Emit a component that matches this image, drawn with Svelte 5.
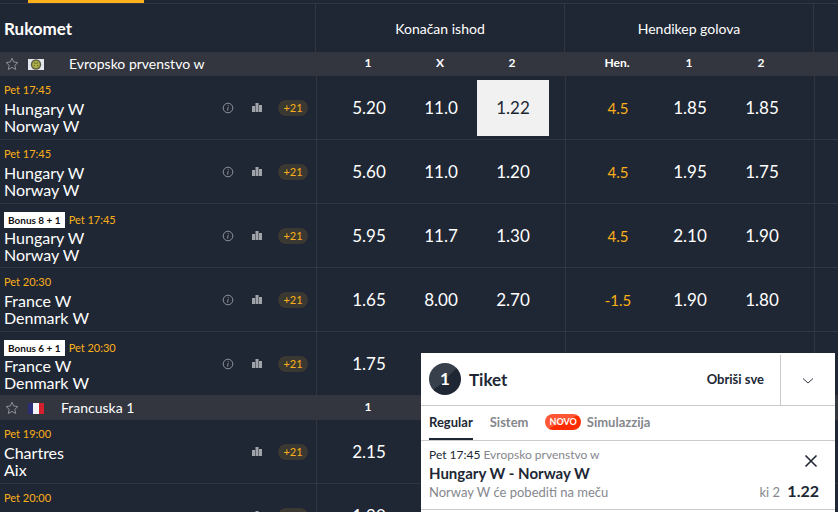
<script lang="ts">
	type Match = {
		time: string;
		home: string;
		away: string;
		odds: string[];
		handicap: string[];
		bonus?: string;
		info?: boolean;
	};

	const leagues: {
		name: string;
		flag: string;
		columns: string[];
		handicapColumns: string[];
		matches: Match[];
	}[] = [
		{
			name: 'Evropsko prvenstvo w',
			flag: 'europe',
			columns: ['1', 'X', '2'],
			handicapColumns: ['Hen.', '1', '2'],
			matches: [
				{
					time: 'Pet 17:45',
					home: 'Hungary W',
					away: 'Norway W',
					odds: ['5.20', '11.0', '1.22'],
					handicap: ['4.5', '1.85', '1.85'],
					info: true
				},
				{
					time: 'Pet 17:45',
					home: 'Hungary W',
					away: 'Norway W',
					odds: ['5.60', '11.0', '1.20'],
					handicap: ['4.5', '1.95', '1.75'],
					info: true
				},
				{
					time: 'Pet 17:45',
					home: 'Hungary W',
					away: 'Norway W',
					odds: ['5.95', '11.7', '1.30'],
					handicap: ['4.5', '2.10', '1.90'],
					bonus: 'Bonus 8 + 1',
					info: true
				},
				{
					time: 'Pet 20:30',
					home: 'France W',
					away: 'Denmark W',
					odds: ['1.65', '8.00', '2.70'],
					handicap: ['-1.5', '1.90', '1.80'],
					info: true
				},
				{
					time: 'Pet 20:30',
					home: 'France W',
					away: 'Denmark W',
					odds: ['1.75'],
					handicap: [],
					bonus: 'Bonus 6 + 1',
					info: true
				}
			]
		},
		{
			name: 'Francuska 1',
			flag: 'france',
			columns: ['1'],
			handicapColumns: [],
			matches: [
				{
					time: 'Pet 19:00',
					home: 'Chartres',
					away: 'Aix',
					odds: ['2.15'],
					handicap: []
				},
				{
					time: 'Pet 20:00',
					home: '',
					away: '',
					odds: ['1.90'],
					handicap: []
				}
			]
		}
	];

	let selected = $state('0-0-2');
	let tab = $state('Regular');
</script>

<main>
	<div class="sports"><span class="active-sport"></span></div>
	<table>
		<colgroup>
			<col class="col-event" />
			<col class="col-market" />
			<col class="col-market" />
			<col />
		</colgroup>
		<thead>
			<tr>
				<th class="sport">Rukomet</th>
				<th>Konačan ishod</th>
				<th>Hendikep golova</th>
				<th></th>
			</tr>
		</thead>
		{#each leagues as league, l}
			<tbody>
				<tr class="league">
					<th scope="rowgroup">
						<div class="league-name">
							<button class="star" aria-label="Omiljeno">
								<svg width="14" height="14" viewBox="0 0 14 14">
									<path
										d="M7 1.2 8.7 5l4.2.5-3.1 2.8.9 4.2L7 10.4l-3.7 2.1.9-4.2-3.1-2.8L5.3 5z"
										fill="none"
										stroke="#8d9097"
										stroke-linejoin="round"
									/>
								</svg>
							</button>
							{#if league.flag === 'france'}
								<svg class="flag" width="16" height="11" viewBox="0 0 16 11">
									<path fill="#2b2d78" d="M0 0h5v11H0z" />
									<path fill="#f4f4f6" d="M5 0h6v11H5z" />
									<path fill="#d3202c" d="M11 0h5v11h-5z" />
								</svg>
							{:else}
								<svg class="flag wide" width="16" height="11" viewBox="0 0 16 11">
									<path fill="#e6e6ee" d="M0 0h16v11H0z" />
									<circle cx="8" cy="5.5" r="5.2" fill="#5c5f45" />
									<circle cx="8" cy="5.5" r="3.8" fill="#a9ab45" />
									<path d="m5.5 3 5 4.5M6 7l4-3.5" stroke="#63652b" />
									<path d="m7 5 2 1.5" stroke="#dfe06d" />
								</svg>
							{/if}
							<span>{league.name}</span>
						</div>
					</th>
					{#each [league.columns, league.handicapColumns] as columns}
						<td>
							<div class="labels">
								{#each columns as column}<span>{column}</span>{/each}
							</div>
						</td>
					{/each}
					<td></td>
				</tr>
				{#each league.matches as match, m}
					<tr class="match">
						<td class="event">
							<div class="event-row">
								<div class="teams">
									<div class="time" class:with-bonus={match.bonus}>
										{#if match.bonus}<span class="bonus">{match.bonus}</span>{/if}
										<span>{match.time}</span>
									</div>
									<div>{match.home}</div>
									<div>{match.away}</div>
								</div>
								<div class="actions">
									{#if match.info}
										<button aria-label="Informacije">
											<svg width="12" height="12" viewBox="0 0 12 12" fill="none" stroke="#8d9097">
												<circle cx="6" cy="6" r="4.8" />
												<path d="M6.2 5 5.5 8.7M6.4 3.1l-.2 1" />
											</svg>
										</button>
									{/if}
									<button aria-label="Statistika">
										<svg width="12" height="12" viewBox="0 0 12 12" fill="#a0a3a8">
											<path d="M1 4h3v6H1zM4.5 1h3v9h-3zM8 3h3v7H8z" />
										</svg>
									</button>
									<button class="more">+21</button>
								</div>
							</div>
						</td>
						<td>
							<div class="odds">
								{#each match.odds as odd, o}
									<button
										class:selected={selected === `${l}-${m}-${o}`}
										onclick={() => (selected = `${l}-${m}-${o}`)}>{odd}</button
									>
								{/each}
							</div>
						</td>
						<td>
							<div class="odds">
								{#each match.handicap as odd, o}
									{#if o === 0}
										<span class="line">{odd}</span>
									{:else}
										<button>{odd}</button>
									{/if}
								{/each}
							</div>
						</td>
						<td></td>
					</tr>
				{/each}
			</tbody>
		{/each}
	</table>
</main>

<aside class="ticket">
	<header>
		<span class="count">1</span>
		<h2>Tiket</h2>
		<button class="clear">Obriši sve</button>
		<button class="toggle" aria-label="Sakrij tiket">
			<svg width="12" height="8" viewBox="0 0 12 8" fill="none" stroke="#333a46">
				<path d="m1 1.5 5 4.5 5-4.5" />
			</svg>
		</button>
	</header>
	<nav>
		<button class:active={tab === 'Regular'} onclick={() => (tab = 'Regular')}>Regular</button>
		<button class:active={tab === 'Sistem'} onclick={() => (tab = 'Sistem')}>Sistem</button>
		<button class:active={tab === 'Simulazzija'} onclick={() => (tab = 'Simulazzija')}>
			<span class="new">NOVO</span>Simulazzija
		</button>
	</nav>
	<div class="bet">
		<div>
			<p class="when">Pet 17:45 <span>Evropsko prvenstvo w</span></p>
			<h3>Hungary W - Norway W</h3>
			<p class="pick">Norway W će pobediti na meču</p>
		</div>
		<div class="bet-side">
			<button aria-label="Ukloni">
				<svg width="16" height="14" viewBox="0 0 16 14" stroke="#202734" stroke-width="1.6">
					<path d="m2.5 1.5 11 11m0-11-11 11" />
				</svg>
			</button>
			<p>ki 2 <strong>1.22</strong></p>
		</div>
	</div>
</aside>

<style>
	:global(body) {
		margin: 0;
		background: #202734;
	}

	main,
	.ticket {
		font-family: Lato, 'Noto Sans', sans-serif;
	}

	main {
		height: 100vh;
		overflow-y: auto;
		scrollbar-width: none;
		color: #fff;
	}

	button {
		padding: 0;
		border: 0;
		background: none;
		color: inherit;
		font: inherit;
		cursor: pointer;
	}

	svg {
		display: block;
	}

	p,
	h2,
	h3 {
		margin: 0;
	}

	.sports {
		height: 3px;
		padding-left: 28px;
		border-bottom: 1px solid #313642;
	}

	.active-sport {
		display: block;
		width: 116px;
		height: 3px;
		background: #fbb019;
	}

	table {
		width: 100%;
		table-layout: fixed;
		border-spacing: 0;
	}

	th,
	td {
		padding: 0;
		vertical-align: top;
	}

	.col-event {
		width: 316px;
	}

	.col-market {
		width: 249px;
	}

	thead th {
		height: 48px;
		border-right: 1px solid #313642;
		font-size: 14px;
		font-weight: 400;
		vertical-align: middle;
	}

	thead th:last-child {
		border-right: 0;
	}

	thead .sport {
		padding-left: 4px;
		font-size: 17px;
		font-weight: 700;
		text-align: left;
	}

	.league {
		background: #33363f;
	}

	.league-name {
		display: flex;
		align-items: center;
		height: 24px;
		padding-left: 5px;
		font-size: 14px;
		font-weight: 400;
		line-height: 16px;
	}

	.flag {
		margin-left: 9px;
		margin-right: 17px;
	}

	.flag.wide {
		margin-right: 25px;
	}

	.labels {
		display: flex;
		padding: 0 16px;
	}

	.labels span {
		width: 72px;
		font-size: 12px;
		font-weight: 700;
		line-height: 22px;
		text-align: center;
	}

	.match td {
		height: 63px;
		border-bottom: 1px solid #313642;
	}

	.match:last-child td {
		border-bottom-color: #33363f;
	}

	.match td + td {
		border-left: 1px solid #313642;
	}

	.event-row {
		display: flex;
		justify-content: space-between;
		padding: 0 8px 0 4px;
	}

	.teams {
		padding-top: 7px;
		font-size: 16px;
		line-height: 17px;
	}

	.time {
		display: flex;
		gap: 4px;
		margin-bottom: 4px;
		color: #fbb019;
		font-size: 11px;
		line-height: 13px;
	}

	.time.with-bonus {
		margin: 1px 0;
		line-height: 16px;
	}

	.bonus {
		padding: 0 4px;
		background: #fff;
		color: #111;
		font-size: 10px;
		font-weight: 700;
	}

	.actions {
		display: flex;
		align-items: center;
		gap: 17px;
		height: 63px;
	}

	.more {
		width: 30px;
		height: 16px;
		margin-left: -2px;
		border-radius: 8px;
		background: #393832;
		color: #fbb019;
		font-size: 11px;
		line-height: 16px;
	}

	.odds {
		display: flex;
		padding: 4px 16px 0;
	}

	.odds button,
	.line {
		width: 72px;
		height: 56px;
		font-size: 17px;
		line-height: 56px;
		text-align: center;
	}

	.odds .line {
		color: #fbb019;
		font-size: 15px;
	}

	.odds .selected {
		background: #f1f1f1;
		color: #202734;
	}

	.ticket {
		position: fixed;
		right: 3px;
		bottom: 0;
		width: 414px;
		padding-bottom: 2px;
		background: #fff;
		color: #202734;
	}

	.ticket header {
		display: flex;
		align-items: center;
		height: 52px;
		padding-left: 8px;
		border-bottom: 1px solid #cbcbcd;
	}

	.count {
		width: 32px;
		border-radius: 50%;
		background: linear-gradient(135deg, #37404b 50%, #202734 50%);
		color: #fff;
		font-size: 17px;
		font-weight: 700;
		line-height: 32px;
		text-align: center;
	}

	h2 {
		margin-left: 8px;
		font-size: 17px;
		font-weight: 700;
	}

	.clear {
		margin-left: auto;
		padding-right: 16px;
		font-size: 13px;
		font-weight: 700;
	}

	.toggle {
		display: flex;
		align-items: center;
		justify-content: center;
		align-self: stretch;
		width: 55px;
		margin-top: 2px;
		border-left: 1px solid #cbcbcd;
	}

	.toggle svg {
		margin-top: 2px;
	}

	nav {
		display: flex;
		gap: 17px;
		height: 34px;
		padding: 0 8px;
		border-bottom: 1px solid #cbcbcd;
	}

	nav button {
		display: flex;
		align-items: center;
		gap: 6px;
		border-bottom: 2px solid transparent;
		color: #85878d;
		font-size: 13px;
		font-weight: 700;
	}

	nav .active {
		border-color: #202734;
		color: #202734;
	}

	.new {
		padding: 0 4px;
		border-radius: 8px;
		background: linear-gradient(155deg, #ff5736 50%, #ff2b00 50%);
		color: #fff;
		font-size: 9px;
		line-height: 16px;
	}

	.bet {
		display: flex;
		justify-content: space-between;
		padding: 5px 16px 7px 8px;
		border-bottom: 1px solid #cbcbcd;
	}

	.when {
		font-size: 12px;
		line-height: 18px;
	}

	.when span,
	.pick,
	.bet-side {
		color: #85878d;
	}

	h3 {
		font-size: 15px;
		line-height: 19px;
	}

	.pick {
		font-size: 13px;
		line-height: 19px;
	}

	.bet-side {
		display: flex;
		flex-direction: column;
		align-items: flex-end;
		justify-content: space-between;
		padding-top: 8px;
		font-size: 13px;
		line-height: 19px;
	}

	strong {
		margin-left: 4px;
		color: #202734;
		font-size: 16px;
	}
</style>
